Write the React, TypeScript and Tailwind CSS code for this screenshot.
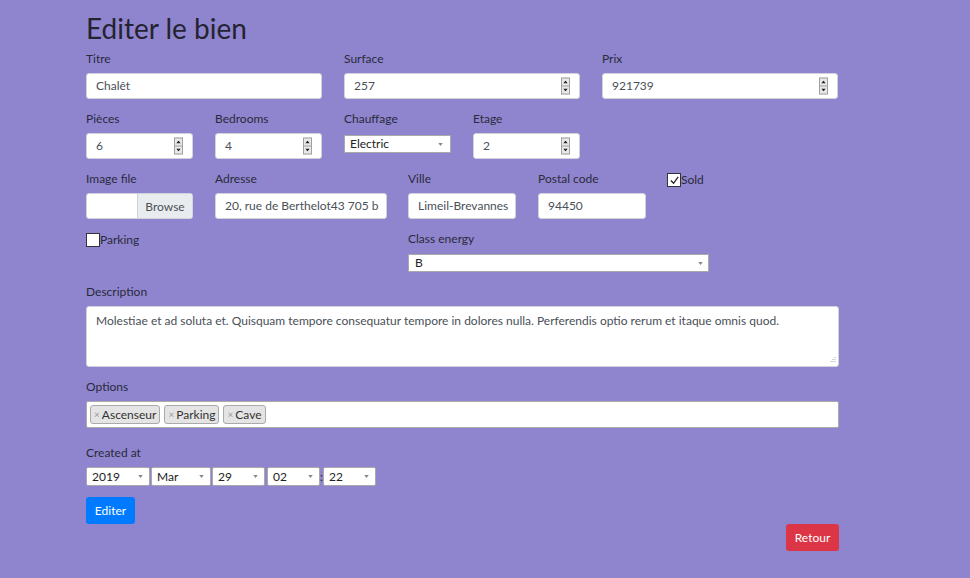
import React from "react";

function Spinner() {
  return (
    <span className="absolute right-[9px] top-1/2 -translate-y-1/2 flex flex-col w-[9px] h-[17px] border border-[#a0a0a0] bg-[#e8e8e8]">
      <span className="flex-1 flex items-center justify-center border-b border-[#a0a0a0]">
        <svg viewBox="0 0 6 4" className="w-[5px] h-[3px]">
          <path d="M0 4 L3 0 L6 4 Z" fill="#222" />
        </svg>
      </span>
      <span className="flex-1 flex items-center justify-center">
        <svg viewBox="0 0 6 4" className="w-[5px] h-[3px]">
          <path d="M0 0 L3 4 L6 0 Z" fill="#222" />
        </svg>
      </span>
    </span>
  );
}

function Caret() {
  return (
    <svg viewBox="0 0 6 4" className="w-[5px] h-[3px] shrink-0">
      <path d="M0 0 L3 4 L6 0 Z" fill="#888" />
    </svg>
  );
}

function Label({ children, mb = "mb-[7px]" }: { children: React.ReactNode; mb?: string }) {
  return <span className={`text-[12px] text-[#2a2a3a] leading-[14px] ${mb}`}>{children}</span>;
}

function Field({
  label,
  value,
  width,
  spin,
  className = "",
}: {
  label: string;
  value: string;
  width: string;
  spin?: boolean;
  className?: string;
}) {
  return (
    <div className={`flex flex-col ${width} ${className}`}>
      <Label>{label}</Label>
      <div className="relative h-[26px] bg-white rounded-[3px] border border-[#d0d4da] flex items-center pl-[9px] text-[12px] text-[#495057]">
        {value}
        {spin && <Spinner />}
      </div>
    </div>
  );
}

function Check({ label, checked }: { label: string; checked?: boolean }) {
  return (
    <div className="flex items-start">
      <span className="w-[14px] h-[14px] bg-white border border-[#333] flex items-center justify-center">
        {checked && (
          <svg viewBox="0 0 12 12" className="w-[11px] h-[11px]">
            <path d="M2 6 L5 9 L10 2" stroke="#222" strokeWidth="1.4" fill="none" />
          </svg>
        )}
      </span>
      <span className="text-[12px] text-[#2a2a3a] leading-[14px]">{label}</span>
    </div>
  );
}

function SmallSelect({ value, width, className = "" }: { value: string; width: string; className?: string }) {
  return (
    <div
      className={`${width} ${className} h-[19px] bg-white border border-[#a9a9a9] rounded-[2px] flex items-center justify-between pl-[5px] pr-[6px] text-[12px] text-[#222]`}
    >
      <span>{value}</span>
      <Caret />
    </div>
  );
}

function Tag({ label }: { label: string }) {
  return (
    <span className="h-[19px] flex items-center gap-[2px] px-[3px] bg-[#e4e4e4] border border-[#aaa] rounded-[3px] text-[12px] text-[#333]">
      <span className="text-[#999] text-[10px]">×</span>
      {label}
    </span>
  );
}

export default function App() {
  return (
    <div
      className="w-full min-h-[578px] bg-[#8f85cf]"
      style={{ fontFamily: 'Lato, "Open Sans", sans-serif' }}
    >
      <div className="w-[753px] ml-[86px] pt-[10px] flex flex-col">
        <h1 className="text-[28px] leading-[36px] text-[#25232f] mb-[6px]">Editer le bien</h1>

        <div className="flex gap-[22px]">
          <Field label="Titre" value="Chalêt" width="w-[236px]" />
          <Field label="Surface" value="257" width="w-[236px]" spin />
          <Field label="Prix" value="921739" width="w-[236px]" spin />
        </div>

        <div className="flex gap-[22px] mt-[13px]">
          <Field label="Pièces" value="6" width="w-[107px]" spin />
          <Field label="Bedrooms" value="4" width="w-[107px]" spin />
          <div className="flex flex-col w-[107px]">
            <Label mb="mb-[9px]">Chauffage</Label>
            <div className="h-[18px] bg-white border border-[#a9a9a9] flex items-center justify-between pl-[5px] pr-[7px] text-[12px] text-[#222]">
              <span>Electric</span>
              <Caret />
            </div>
          </div>
          <Field label="Etage" value="2" width="w-[107px]" spin />
        </div>

        <div className="flex mt-[13px]">
          <div className="flex flex-col w-[107px]">
            <Label>Image file</Label>
            <div className="h-[26px] bg-white rounded-[3px] border border-[#d0d4da] flex">
              <span className="flex-1" />
              <span className="w-[55px] bg-[#e9ecef] border-l border-[#d0d4da] flex items-center justify-center text-[12px] text-[#495057] pt-[2px]">
                Browse
              </span>
            </div>
          </div>
          <Field label="Adresse" value="20, rue de Berthelot43 705 b" width="w-[172px]" className="ml-[22px]" />
          <Field label="Ville" value="Limeil-Brevannes" width="w-[108px]" className="ml-[21px]" />
          <Field label="Postal code" value="94450" width="w-[108px]" className="ml-[22px]" />
          <div className="ml-[21px] mt-[1px]">
            <Check label="Sold" checked />
          </div>
        </div>

        <div className="flex mt-[13px]">
          <div className="w-[322px] pt-[1px]">
            <Check label="Parking" />
          </div>
          <div className="flex flex-col w-[301px]">
            <Label mb="mb-[8px]">Class energy</Label>
            <div className="h-[18px] bg-white border border-[#a9a9a9] flex items-center justify-between pl-[6px] pr-[5px] text-[12px] text-[#222]">
              <span>B</span>
              <Caret />
            </div>
          </div>
        </div>

        <div className="flex flex-col mt-[13px]">
          <Label>Description</Label>
          <div className="relative h-[61px] bg-white rounded-[3px] border border-[#d0d4da] px-[9px] pt-[5px] text-[12px] text-[#495057] leading-[18px]">
            Molestiae et ad soluta et. Quisquam tempore consequatur tempore in dolores nulla. Perferendis optio rerum et itaque omnis quod.
            <svg viewBox="0 0 8 8" className="absolute right-[2px] bottom-[2px] w-[8px] h-[8px]">
              <path d="M7 1 V2 M5 3 V4 M7 3 V4 M3 5 V6 M5 5 V6 M7 5 V6" stroke="#aaa" strokeWidth="1" />
            </svg>
          </div>
        </div>

        <div className="flex flex-col mt-[13px]">
          <Label>Options</Label>
          <div className="h-[27px] bg-white rounded-[2px] border border-[#aaa] flex items-center gap-[4px] pl-[3px]">
            <Tag label="Ascenseur" />
            <Tag label="Parking" />
            <Tag label="Cave" />
          </div>
        </div>

        <div className="flex flex-col mt-[18px]">
          <Label>Created at</Label>
          <div className="flex items-center">
            <SmallSelect value="2019" width="w-[64px]" />
            <SmallSelect value="Mar" width="w-[60px]" className="ml-[1px]" />
            <SmallSelect value="29" width="w-[53px]" className="ml-[1px]" />
            <SmallSelect value="02" width="w-[53px]" className="ml-[2px]" />
            <span className="w-[3px] text-center text-[12px] text-[#222] leading-[12px]">:</span>
            <SmallSelect value="22" width="w-[53px]" />
          </div>
        </div>

        <div className="flex mt-[11px]">
          <button className="h-[27px] w-[49px] bg-[#007bff] text-white text-[12px] rounded-[3px]">
            Editer
          </button>
        </div>

        <div className="flex justify-end">
          <button className="h-[27px] w-[53px] bg-[#dc3545] text-white text-[12px] rounded-[3px]">
            Retour
          </button>
        </div>
      </div>
    </div>
  );
}
